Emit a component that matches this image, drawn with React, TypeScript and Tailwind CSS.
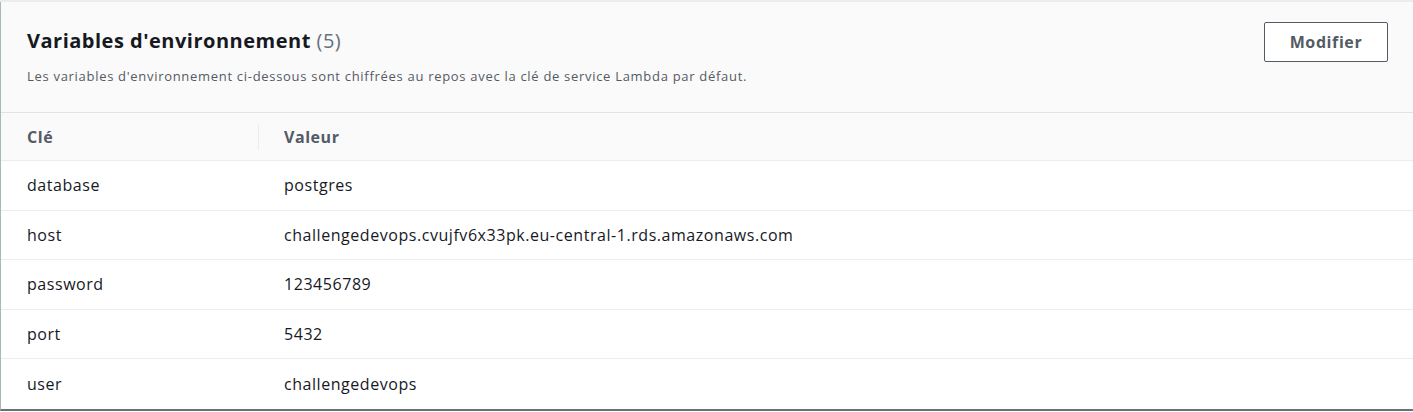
const rows = [
  { key: 'database', value: 'postgres' },
  { key: 'host', value: 'challengedevops.cvujfv6x33pk.eu-central-1.rds.amazonaws.com' },
  { key: 'password', value: '123456789' },
  { key: 'port', value: '5432' },
  { key: 'user', value: 'challengedevops' },
];

export default function App() {
  return (
    <div className="w-[1413px] h-[412px] bg-white font-['Open_Sans',sans-serif] overflow-hidden">
      <div className="h-[2px] bg-[#eaeded]" />
      <div className="border-l border-[#aab7b8] border-b-2 border-b-[#687078] bg-white">
        {/* header */}
        <div className="bg-[#fafafa] h-[111px] pl-[26px] pr-[25px] flex justify-between border-b border-[#e1e4e4]">
          <div className="pt-[25px]">
            <h2 className="text-[20px] leading-[28px] font-bold text-[#16191f] tracking-[0.5px]">
              Variables d'environnement <span className="font-normal text-[#687078]">(5)</span>
            </h2>
            <p className="mt-[12px] text-[13px] leading-[18px] text-[#545b64] tracking-[0.7px]">
              Les variables d'environnement ci-dessous sont chiffrées au repos avec la clé de service Lambda par défaut.
            </p>
          </div>
          <div className="pt-[20px]">
            <button className="w-[124px] h-[40px] bg-white border border-[#545b64] rounded-[2px] text-[16px] font-bold text-[#545b64] tracking-[0.6px]">
              Modifier
            </button>
          </div>
        </div>

        {/* table */}
        <div className="grid grid-cols-[257px_1fr] tracking-[0.55px]">
          <div className="bg-[#fafafa] h-[48px] pl-[26px] flex items-center text-[16px] font-bold text-[#545b64] border-b border-[#eaeded]">
            Clé
          </div>
          <div className="bg-[#fafafa] h-[48px] flex items-center text-[16px] font-bold text-[#545b64] border-b border-[#eaeded]">
            <div className="w-px h-[26px] bg-[#eaeded] mr-[25px]" />
            Valeur
          </div>
          {rows.map((r, i) => {
            const last = i === rows.length - 1;
            const cell = `${last ? 'h-[50px]' : 'h-[49.5px] border-b border-[#eaeded]'} pl-[26px] flex items-center text-[16px] text-[#16191f]`;
            return (
              <div key={r.key} className="contents">
                <div className={cell}>{r.key}</div>
                <div className={cell}>{r.value}</div>
              </div>
            );
          })}
        </div>
      </div>
    </div>
  );
}
